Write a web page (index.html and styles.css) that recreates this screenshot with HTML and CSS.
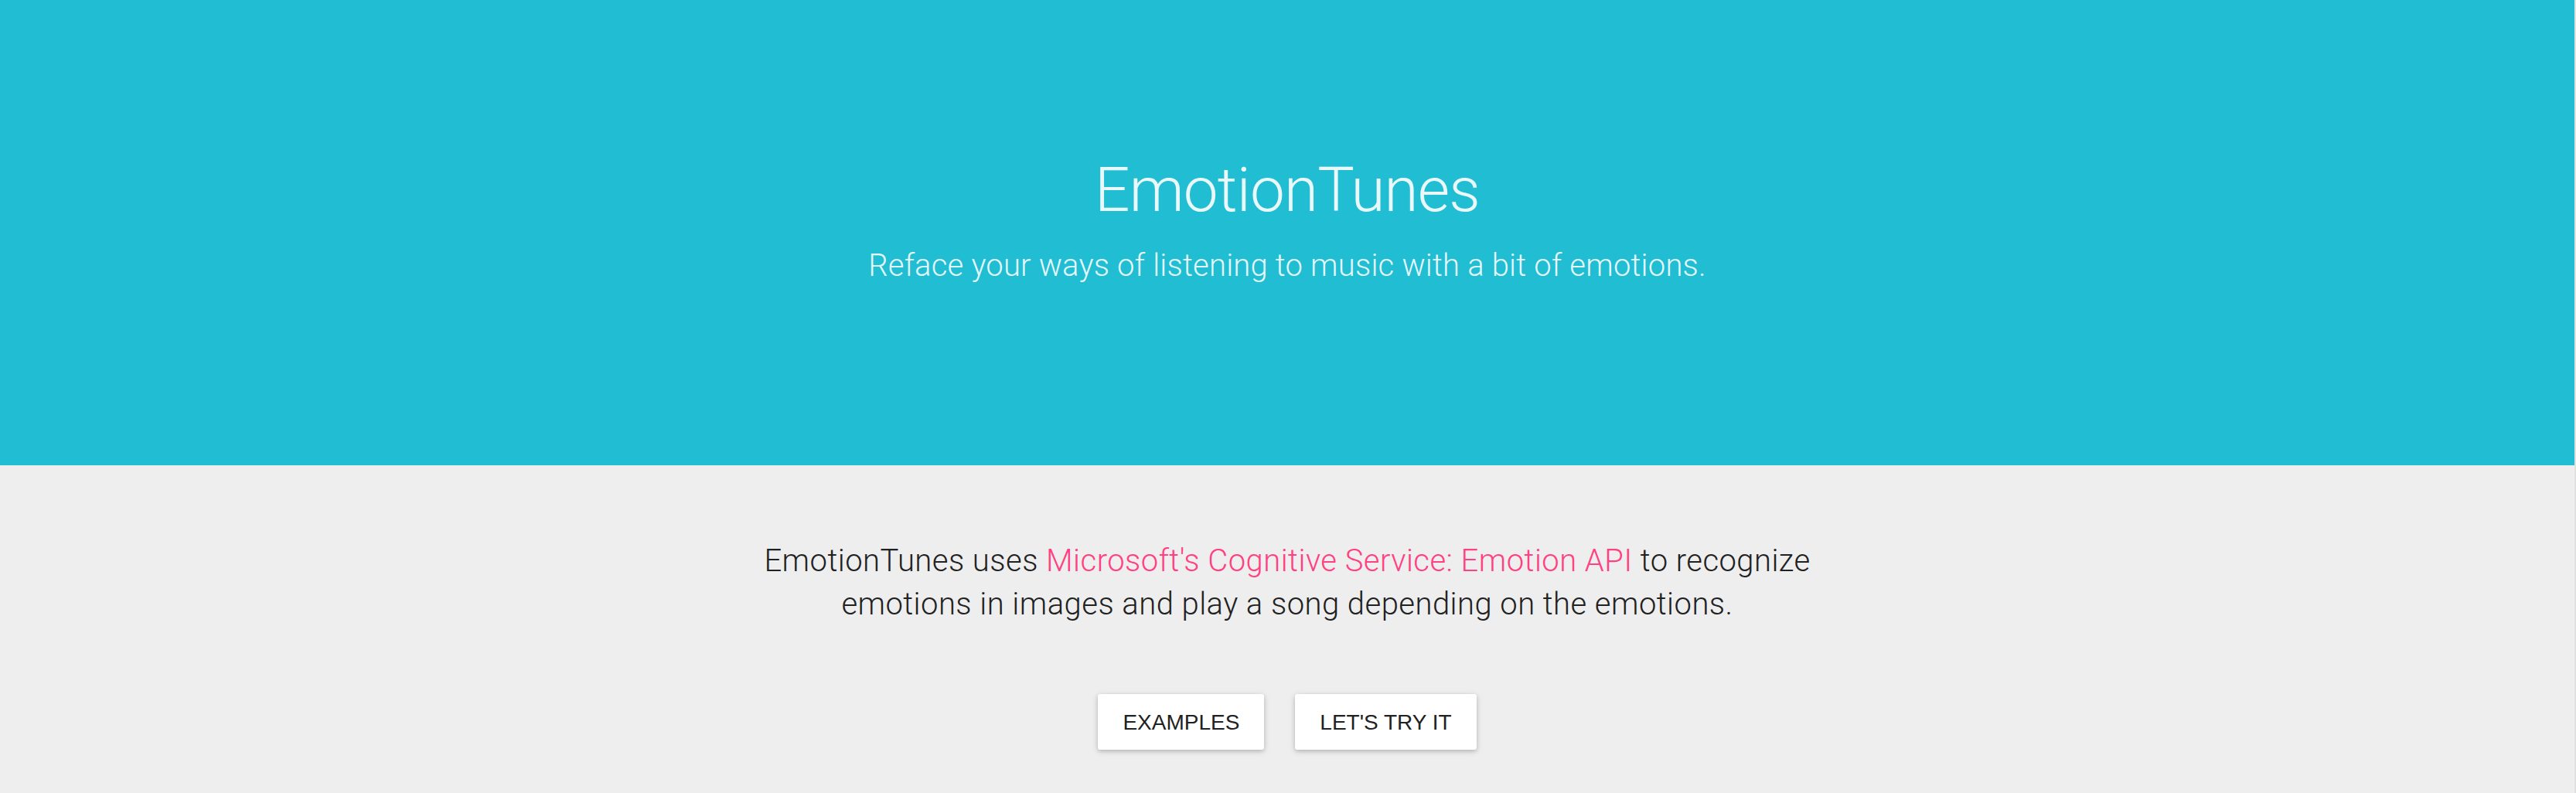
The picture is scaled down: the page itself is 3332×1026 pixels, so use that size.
FILE: index.html
```
<!DOCTYPE html>
<html lang="en">
<head>
<meta charset="utf-8">
<title>EmotionTunes</title>
<link rel="stylesheet" href="styles.css">
</head>
<body>
<header class="hero">
  <h1 class="hero-title">EmotionTunes</h1>
  <p class="hero-subtitle">Reface your ways of listening to music with a bit of emotions.</p>
</header>
<main class="intro">
  <p class="intro-text">EmotionTunes uses <a class="intro-link" href="#">Microsoft's Cognitive Service: Emotion API</a> to recognize emotions in images and play a song depending on the emotions.</p>
  <div class="actions">
    <a class="btn" href="#">EXAMPLES</a>
    <a class="btn" href="#">LET'S TRY IT</a>
  </div>
</main>
</body>
</html>
```

FILE: styles.css
```
html, body {
  margin: 0;
  padding: 0;
}
body {
  background: #eeeeee;
  border-right: 2px solid #e2e2e2;
  font-family: Roboto, "Liberation Sans", Arial, sans-serif;
  font-weight: 300;
  min-height: 1026px;
  box-sizing: border-box;
}
.hero {
  background: #21bdd3;
  height: 602px;
  box-sizing: border-box;
  padding-top: 202px;
  text-align: center;
  color: rgba(255, 255, 255, 0.9);
}
.hero-title {
  margin: 0;
  font-size: 80px;
  line-height: 88px;
  font-weight: 300;
  letter-spacing: -0.8px;
}
.hero-subtitle {
  margin: 30px 0 0;
  font-size: 40px;
  line-height: 48px;
  font-weight: 300;
  letter-spacing: 0.2px;
}
.intro {
  padding-top: 96px;
  display: flex;
  flex-direction: column;
  align-items: center;
}
.intro-text {
  margin: 0;
  max-width: 1420px;
  text-align: center;
  font-size: 40px;
  line-height: 56px;
  color: #212121;
  font-weight: 300;
  letter-spacing: 0.45px;
}
.intro-link {
  color: #ff4081;
  text-decoration: none;
}
.actions {
  margin-top: 88px;
  display: flex;
  gap: 40px;
}
.btn {
  display: block;
  height: 72px;
  box-sizing: border-box;
  padding: 2px 32px 0;
  line-height: 70px;
  background: #ffffff;
  border-radius: 3px;
  box-shadow: 0 2px 5px rgba(0, 0, 0, 0.16), 0 2px 10px rgba(0, 0, 0, 0.12);
  font-family: "Liberation Sans", Arial, sans-serif;
  font-weight: 400;
  font-size: 28px;
  color: #212121;
  text-decoration: none;
}
```
